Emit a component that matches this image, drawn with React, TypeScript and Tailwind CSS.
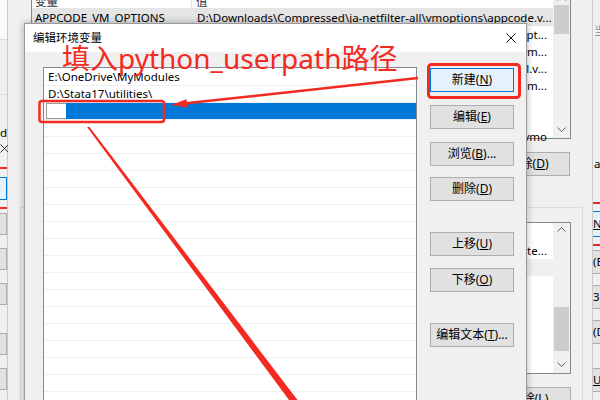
import React from 'react';

const ui = "font-['Noto_Sans','Noto_Sans_CJK_SC',sans-serif]";
const RED = '#f32a21';

type Row = { name: string; value: string; sel?: boolean; alignEnd?: boolean };

const userRows: Row[] = [
  { name: 'APPCODE_VM_OPTIONS', value: 'D:\\Downloads\\Compressed\\ja-netfilter-all\\vmoptions\\appcode.v...', sel: true },
  { name: 'CLION_VM_OPTIONS', value: 'D:\\Downloads\\Compressed\\ja-netfilter-all\\vmoptions\\clion.vmopt...', alignEnd: true },
  { name: 'DATAGRIP_VM_OPTIONS', value: 'D:\\Downloads\\Compressed\\ja-netfilter-all\\vmoptions\\datagrip.vm...', alignEnd: true },
  { name: 'DATASPELL_VM_OPTIONS', value: 'D:\\Downloads\\Compressed\\ja-netfilter-all\\vmoptions\\dataspell.v...', alignEnd: true },
  { name: 'GATEWAY_VM_OPTIONS', value: 'D:\\Downloads\\Compressed\\ja-netfilter-all\\vmoptions\\gateway.vm...', alignEnd: true },
  { name: 'GOLAND_VM_OPTIONS', value: 'D:\\Downloads\\Compressed' },
  { name: 'IDEA_VM_OPTIONS', value: 'D:\\Downloads\\Compressed' },
  { name: 'JETBRAINSCLIENT_VM_OPTIONS', value: 'D:\\Downloads\\Compressed\\ja-netfilter-all\\vmo', alignEnd: true },
];

const Chevron = ({ up = false }: { up?: boolean }) => (
  <svg width="9" height="5" viewBox="0 0 9 5">
    <path d={up ? 'M0.5 4.5L4.5 0.5L8.5 4.5' : 'M0.5 0.5L4.5 4.5L8.5 0.5'} stroke="#606060" fill="none" />
  </svg>
);

const Btn = ({
  label,
  k,
  tail = '',
  primary = false,
  className = '',
}: {
  label: string;
  k: string;
  tail?: string;
  primary?: boolean;
  className?: string;
}) => (
  <div
    className={`h-[24px] flex items-center justify-center border text-[12px] text-black whitespace-nowrap ${
      primary ? 'bg-[#e5f1fb] border-[#0078d7]' : 'bg-[#e1e1e1] border-[#adadad]'
    } ${className}`}
  >
    {label}(<span className="underline">{k}</span>){tail}
  </div>
);

const LeftStrip = () => (
  <div className="absolute left-[-90px] top-0 w-[98px] h-[400px] bg-[#f0f0f0] border-r border-[#c9c9c9] flex flex-col items-end">
    <div className="w-full h-[40px] bg-[#f9f9f9] border-b border-[#dcdcdc]" />
    <div className="w-full h-[55px] border-b border-[#dcdcdc]" />
    <div className="mt-[29px] h-[17px] text-[11.5px] whitespace-nowrap">appcod</div>
    <svg className="mt-[3px] mr-[-2px]" width="9" height="9" viewBox="0 0 9 9">
      <path d="M0.5 0.5L8.5 8.5M8.5 0.5L0.5 8.5" stroke="#333" />
    </svg>
    <div className="mt-[14px] w-full h-[42px] border-y-[2px] border-[#f32a21] flex justify-end pt-[8px]">
      <div className="w-[60px] h-[23px] bg-[#e5f1fb] border border-[#0078d7]" />
    </div>
    <div className="mt-[4px] w-[60px] h-[22px] bg-[#e1e1e1] border border-[#adadad]" />
    <div className="mt-[13px] w-[60px] h-[22px] bg-[#e1e1e1] border border-[#adadad]" />
    <div className="mt-[13px] w-[60px] h-[22px] bg-[#e1e1e1] border border-[#adadad]" />
    <div className="mt-[28px] w-[60px] h-[22px] bg-[#e1e1e1] border border-[#adadad]" />
    <div className="mt-[13px] w-[60px] h-[22px] bg-[#e1e1e1] border border-[#adadad]" />
  </div>
);

const RightStrip = () => (
  <div className="absolute left-[592px] top-0 w-[90px] h-[400px] bg-[#f0f0f0] border-l border-[#c9c9c9] flex flex-col text-[11.5px]">
    <div className="mt-[22px] h-[17px] pl-[1px] text-[#8a8a8a] whitespace-nowrap">当前</div>
    <div className="mt-[116px] h-[17px] pl-[1px] whitespace-nowrap">a</div>
    <div className="mt-[30px] h-[44px] border-y-[2px] border-[#f32a21] pt-[7px]">
      <div className="h-[26px] bg-[#e5f1fb] border-y border-[#0078d7] flex items-center whitespace-nowrap">
        <span className="underline">N</span>)
      </div>
    </div>
    <div className="mt-[4px] h-[24px] bg-[#e1e1e1] border-y border-[#adadad] flex items-center whitespace-nowrap">(E)</div>
    <div className="mt-[11px] h-[24px] bg-[#e1e1e1] border-y border-[#adadad] flex items-center whitespace-nowrap">3)</div>
    <div className="mt-[11px] h-[24px] bg-[#e1e1e1] border-y border-[#adadad] flex items-center whitespace-nowrap">(D)</div>
    <div className="mt-[24px] h-[24px] bg-[#e1e1e1] border-y border-[#adadad] flex items-center whitespace-nowrap">
      <span className="underline">U</span>)
    </div>
  </div>
);

const Scrollbar = ({ thumbTop, thumbH, h }: { thumbTop: number; thumbH: number; h: number }) => (
  <div className="w-[17px] shrink-0 bg-[#f0f0f0] relative" style={{ height: h }}>
    <div className="h-[13px] flex items-center justify-center">
      <Chevron up />
    </div>
    <div className="absolute left-[1px] right-[1px] bg-[#cdcdcd]" style={{ top: thumbTop, height: thumbH }} />
    <div className="absolute bottom-0 left-0 right-0 h-[17px] flex items-center justify-center">
      <Chevron />
    </div>
  </div>
);

const BackWindow = () => (
  <div className="absolute left-[8px] top-[-9px] w-[584px] h-[430px] bg-[#f0f0f0] flex flex-col text-[11.5px]">
    {/* user variables */}
    <div className="ml-[23px] w-[540px] h-[148px] border border-[#828790] bg-white flex">
      <div className="flex-1 min-w-0 flex flex-col">
        <div className="h-[17px] shrink-0 flex items-end text-[#333] border-b border-[#e5e5e5]">
          <div className="w-[160px] pl-[3px] border-r border-[#e5e5e5] h-full leading-[12px] flex items-end">变量</div>
          <div className="pl-[4px] leading-[12px]">值</div>
        </div>
        {userRows.map((r) => (
          <div key={r.name} className={`h-[17px] shrink-0 flex items-center whitespace-nowrap ${r.sel ? 'bg-[#e5e5e5]' : ''}`}>
            <div className="w-[161px] pl-[3px] overflow-hidden">{r.name}</div>
            <div className={`flex-1 min-w-0 overflow-hidden flex pl-[4px] pr-[6px] ${r.alignEnd ? 'justify-end' : ''}`}>
              <span className="shrink-0">{r.value}</span>
            </div>
          </div>
        ))}
      </div>
      <Scrollbar thumbTop={13} thumbH={29} h={146} />
    </div>
    <div className="mt-[13px] pr-[22px] flex justify-end gap-[10px]">
      <Btn label="新建" k="W" tail="..." className="w-[83px]" />
      <Btn label="编辑" k="I" tail="..." className="w-[83px]" />
      <Btn label="删除" k="D" className="w-[83px]" />
    </div>
    {/* system variables */}
    <div className="mt-[31px] ml-[12px] mr-[9px] border border-[#dcdcdc] pt-[14px] pr-[11px] pl-[11px] flex-1 flex flex-col items-stretch">
      <div className="h-[152px] border border-[#828790] bg-white flex">
        <div className="flex-1 min-w-0 flex flex-col">
          <div className="h-[19px] shrink-0" />
          <div className="h-[17px] flex items-center justify-end pr-[6px] whitespace-nowrap overflow-hidden">
            <span className="shrink-0">C:\Program Files\Common Files\Oracle\Java\javapath;C:\Windows\system32;te...</span>
          </div>
          <div className="h-[17px] bg-[#f0f0f0]" />
        </div>
        <Scrollbar thumbTop={84} thumbH={44} h={150} />
      </div>
      <div className="mt-[13px] flex justify-end gap-[10px]">
        <Btn label="新建" k="W" tail="..." className="w-[83px]" />
        <Btn label="删除" k="L" className="w-[83px]" />
      </div>
    </div>
  </div>
);

const paths = ['E:\\OneDrive\\MyModules', 'D:\\Stata17\\utilities\\'];

const EditDialog = () => (
  <div className="absolute left-[24px] top-[23px] w-[503px] h-[420px] border border-[#9a9a9a] bg-[#f0f0f0] shadow-[0_0_7px_rgba(0,0,0,0.3)]">
    <div className="h-[28px] bg-white flex items-center justify-between pl-[8px] pr-[10px]">
      <span className="text-[11.5px]">编辑环境变量</span>
      <svg width="10" height="10" viewBox="0 0 10 10">
        <path d="M0.5 0.5L9.5 9.5M9.5 0.5L0.5 9.5" stroke="#111" />
      </svg>
    </div>
    <div className="flex pl-[18px] pt-[15px] gap-[13px]">
      <div className="w-[374px] h-[360px] border border-[#828790] bg-white pt-[1px] text-[11.5px]">
        {paths.map((p) => (
          <div key={p} className="h-[17px] flex items-center pl-[4px] border-b border-[#f0f0f0] whitespace-nowrap">
            {p}
          </div>
        ))}
        <div className="h-[17px] flex border-b border-[#f0f0f0]">
          <div className="w-[2px]" />
          <div className="w-[20px] border-l border-y border-[#9a9a9a] bg-white" />
          <div className="flex-1 bg-[#0078d7]" />
        </div>
        {Array.from({ length: 17 }).map((_, i) => (
          <div key={i} className="h-[17px] border-b border-[#f0f0f0]" />
        ))}
      </div>
      <div className="w-[84px] flex flex-col pt-[1px]">
        <Btn label="新建" k="N" primary />
        <Btn label="编辑" k="E" className="mt-[13px]" />
        <Btn label="浏览" k="B" tail="..." className="mt-[13px]" />
        <Btn label="删除" k="D" className="mt-[11px]" />
        <Btn label="上移" k="U" className="mt-[31px]" />
        <Btn label="下移" k="O" className="mt-[12px]" />
        <Btn label="编辑文本" k="T" tail="..." className="mt-[31px]" />
      </div>
    </div>
  </div>
);

const Annotations = () => (
  <>
    <div className="absolute left-[62px] top-[44px] text-[28px] leading-none text-[#f32a21] whitespace-nowrap">
      填入python_userpath路径
    </div>
    <svg className="absolute left-0 top-0 pointer-events-none" width="600" height="400" viewBox="0 0 600 400">
      <rect x="428.5" y="64.5" width="91" height="33" rx="3" fill="none" stroke={RED} strokeWidth="3" />
      <rect x="39.5" y="101" width="124.5" height="21" rx="2.5" fill="none" stroke={RED} strokeWidth="2.5" />
      <line x1="418" y1="78" x2="186" y2="103.3" stroke={RED} strokeWidth="2.5" />
      <polygon points="171,105 187.3,107.4 186.5,99.2" fill={RED} />
      <polygon points="87,127 89.5,127 297.5,400 289,400" fill={RED} />
    </svg>
  </>
);

export default function App() {
  return (
    <div className={`relative w-[600px] h-[400px] overflow-hidden bg-[#f0f0f0] text-black ${ui}`}>
      <LeftStrip />
      <RightStrip />
      <BackWindow />
      <EditDialog />
      <Annotations />
    </div>
  );
}
